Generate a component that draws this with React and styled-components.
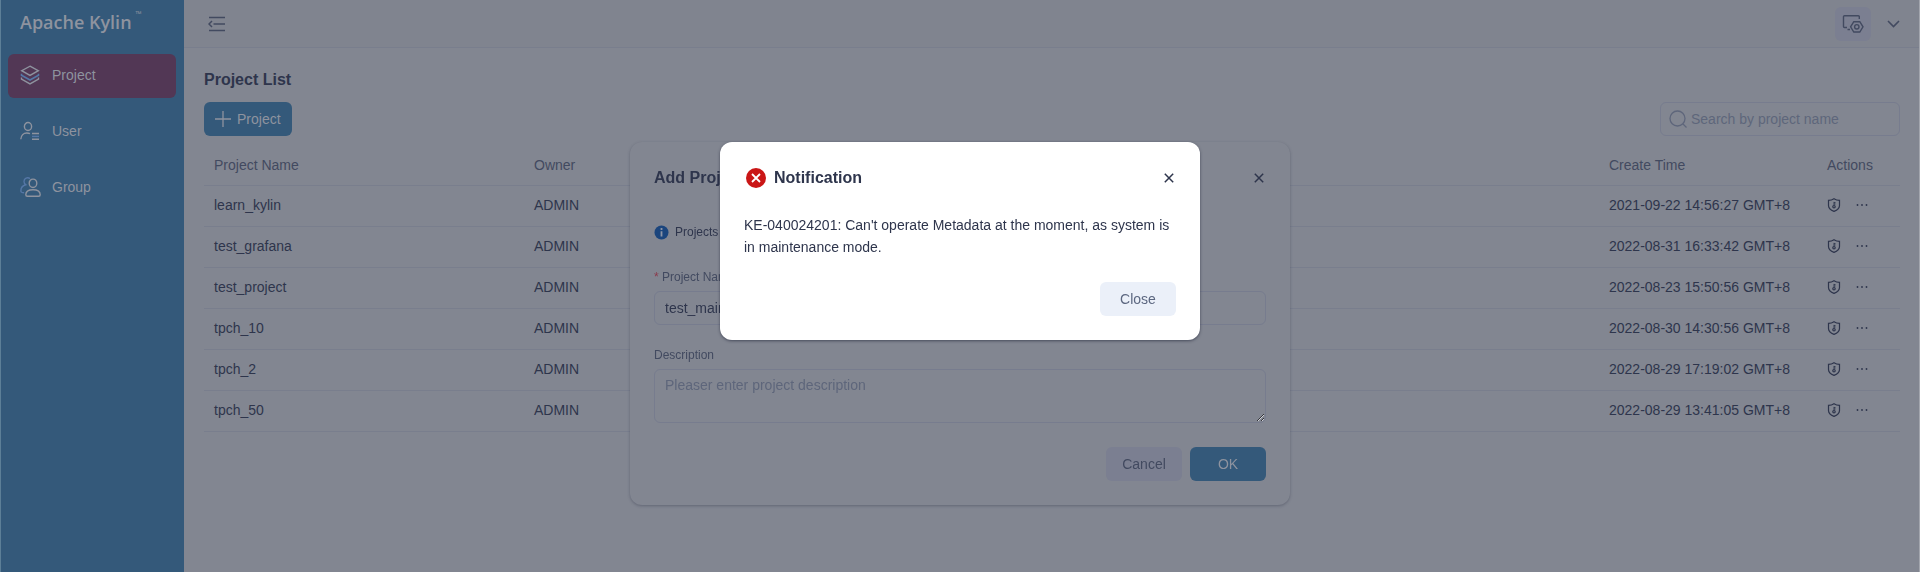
import React from "react";
import styled, { createGlobalStyle } from "styled-components";

const c = {
  page: "#828691",
  bar: "#80848f",
  line: "#797e8d",
  field: "#777c8e",
  blue: "#34597a",
  active: "#523755",
  onBlue: "#8e939f",
  text: "#2e354c",
  muted: "#424a60",
  hint: "#5e667b",
  soft: "#7b7f91",
  accent: "#5577a6",
};

const GlobalStyle = createGlobalStyle`
  * { box-sizing: border-box; }
  body { margin: 0; background: ${c.page}; }
  body, button, input, textarea {
    font-family: "Liberation Sans", Arial, sans-serif;
    font-size: 14px;
  }
  svg { display: block; flex: none; }
`;

const Page = styled.div`
  display: flex;
  min-height: 100vh;
  border-left: 1px solid #5d7f97;
  border-right: 1px solid #a3a6ae;
  color: ${c.text};
`;

const Sidebar = styled.aside`
  width: 183px;
  flex: none;
  background: ${c.blue};
  color: ${c.onBlue};
`;

const Logo = styled.div`
  display: flex;
  align-items: flex-start;
  gap: 4px;
  height: 54px;
  padding: 9px 0 0 19px;
  font: 600 18px/27px "Open Sans", sans-serif;
  sup { font-size: 8px; line-height: 10px; font-weight: 400; }
`;

const Menu = styled.nav`
  display: flex;
  flex-direction: column;
  gap: 12px;
  padding: 0 8px 0 7px;
`;

const MenuItem = styled.a`
  display: flex;
  align-items: center;
  gap: 12px;
  height: 44px;
  padding: 0 12px 2px;
  border-radius: 6px;
  background: ${(p) => (p.$active ? c.active : "transparent")};
  color: inherit;
  text-decoration: none;
`;

const Main = styled.main`
  flex: 1;
  min-width: 0;
`;

const TopBar = styled.header`
  display: flex;
  align-items: center;
  height: 48px;
  padding: 0 19px 0 24px;
  background: ${c.bar};
  border-bottom: 1px solid ${c.line};
`;

const IconButton = styled.button`
  display: flex;
  align-items: center;
  justify-content: center;
  padding: 0;
  border: 0;
  background: none;
  color: ${(p) => (p.$dim ? c.muted : "inherit")};
`;

const AdminButton = styled(IconButton)`
  width: 36px;
  height: 34px;
  margin: 0 16px 0 auto;
  border-radius: 6px;
  background: ${c.soft};
`;

const Content = styled.section`
  padding: 20px 19px 24px 20px;
`;

const Title = styled.h1`
  margin: 0 0 10px;
  font-size: 16px;
  line-height: 24px;
`;

const Tools = styled.div`
  display: flex;
  justify-content: space-between;
  margin-bottom: 8px;
`;

const Button = styled.button`
  display: flex;
  align-items: center;
  justify-content: center;
  gap: 6px;
  height: 34px;
  min-width: 76px;
  padding: 0 11px;
  border: 0;
  border-radius: 6px;
  background: ${(p) => (p.$kind === "primary" ? c.blue : p.$kind === "light" ? "#ebf0f9" : c.soft)};
  color: ${(p) => (p.$kind === "primary" ? c.onBlue : p.$kind === "light" ? "#5c6780" : c.muted)};
`;

const Search = styled.label`
  display: flex;
  align-items: center;
  gap: 4px;
  width: 240px;
  height: 34px;
  padding: 0 8px;
  border: 1px solid ${c.field};
  border-radius: 6px;
  color: ${c.hint};
  input {
    flex: 1;
    min-width: 0;
    padding: 0;
    border: 0;
    outline: 0;
    background: none;
  }
  input::placeholder { color: ${c.hint}; }
`;

const Table = styled.table`
  width: 100%;
  table-layout: fixed;
  border-collapse: separate;
  border-spacing: 0;
  th, td {
    height: 41px;
    padding: 0 10px 2px;
    border-bottom: 1px solid ${c.line};
    text-align: left;
    white-space: nowrap;
  }
  th { height: 42px; padding-bottom: 0; font-weight: 400; color: ${c.muted}; }
`;

const Col = styled.col`
  width: ${(p) => (p.$w ? p.$w + "px" : "auto")};
`;

const RowActions = styled.div`
  display: flex;
  align-items: center;
  gap: 15px;
`;

const Overlay = styled.div`
  position: fixed;
  inset: 0;
  display: flex;
  justify-content: center;
  align-items: flex-start;
  padding-top: 142px;
`;

const Dialog = styled.section`
  width: ${(p) => p.$width}px;
  padding: 24px;
  border-radius: 12px;
  background: ${(p) => (p.$light ? "#fff" : c.page)};
  color: ${c.text};
  box-shadow: 0 1px 3px ${(p) => (p.$light ? "rgba(30, 35, 55, 0.6)" : "rgba(50, 56, 76, 0.4)")};
`;

const DialogHead = styled.header`
  display: flex;
  align-items: center;
  gap: 8px;
  height: 24px;
  margin-bottom: 24px;
  padding-left: ${(p) => (p.$icon ? "2px" : "0")};
  h2 { flex: 1; margin: 0; font-size: 16px; line-height: 24px; }
  button { width: 14px; height: 24px; }
`;

const Message = styled.p`
  margin: 0 0 24px;
  line-height: 22px;
`;

const Info = styled.p`
  display: flex;
  align-items: center;
  gap: 6px;
  height: 36px;
  margin: 0 0 17px;
  font-size: 12px;
`;

const Label = styled.label`
  display: block;
  margin-bottom: 4px;
  font-size: 12px;
  line-height: 20px;
  color: ${c.muted};
  span { color: #8b3a4c; }
`;

const Input = styled.input`
  display: block;
  width: 100%;
  height: 34px;
  margin-bottom: 20px;
  padding: 0 10px;
  border: 1px solid ${c.field};
  border-radius: 6px;
  background: none;
  color: ${c.text};
`;

const TextArea = styled.textarea`
  display: block;
  width: 100%;
  height: 54px;
  margin-bottom: 24px;
  padding: 5px 10px;
  border: 1px solid ${c.field};
  border-radius: 6px;
  background: none;
  line-height: 20px;
  resize: vertical;
  &::placeholder { color: ${c.hint}; }
`;

const Footer = styled.footer`
  display: flex;
  justify-content: flex-end;
  gap: 8px;
`;

const Svg = ({ w, h = w, sw = 1, children }) => (
  <svg width={w} height={h} viewBox={`0 0 ${w} ${h}`} fill="none" stroke="currentColor" strokeWidth={sw} aria-hidden="true">
    {children}
  </svg>
);

const ProjectIcon = () => (
  <Svg w={20} sw={1.4}>
    <path d="M10 1.2 18.300 5.700 10 10.400 1.700 5.700Z" />
    <path d="M1.500 8.700v1.500L10 15l8.500-4.800V8.700" stroke={c.accent} strokeWidth="1.600" />
    <path d="M1.500 12.500v1.600L10 18.900l8.500-4.800v-1.600" />
  </Svg>
);
const UserIcon = () => (
  <Svg w={20} sw={1.4}>
    <ellipse cx="8" cy="5.5" rx="3.6" ry="4" />
    <path d="M.8 18.3c.2-3.8 2.7-6.3 6-6.3 1.3 0 2.2.2 3.2.7" />
    <path d="M12 12.5h7M12 18.3h7" />
    <path d="M12 15.4h7" stroke={c.accent} />
  </Svg>
);
const GroupIcon = () => (
  <Svg w={22} h={20} sw={1.4}>
    <path d="M10 1.6C7.500-.3 4 1.200 4 4.500c0 1.500.8 2.600 1.800 3.300C2.500 8.700.7 11.200.9 14.200c.1 1 1.600 1.500 3.200 1.500" stroke={c.accent} />
    <ellipse cx="13" cy="6.300" rx="3.800" ry="4.200" />
    <path d="M5.800 17.700c0-3 2.800-5 7.200-5s7.200 2 7.200 5c0 1-.6 1.500-1.500 1.500H7.300c-.9 0-1.500-.5-1.500-1.500Z" />
  </Svg>
);
const GroupSlot = styled.span`
  width: 20px;
`;
const FoldIcon = () => (
  <Svg w={18} h={16} sw={1.5}>
    <path d="M1 1.5h16M5.500 8H17M1 14.500h16M4 5 1 8l3 3" />
  </Svg>
);
const AdminIcon = () => (
  <Svg w={22} h={20} sw={1.4}>
    <path d="M17.300 5V2.700a1 1 0 0 0-1-1H2.500a1 1 0 0 0-1 1V12.500a1 1 0 0 0 1 1H5M5.500 15.500H8" />
    <path d="M11.800 7.700h6l3.200 5.100-3.200 5.200h-6l-3.200-5.200Z" />
    <circle cx="14.800" cy="12.800" r="2.200" />
  </Svg>
);
const ChevronIcon = () => (
  <Svg w={13} h={8} sw={1.6}><path d="m1 1 5.500 5.500L12 1" /></Svg>
);
const PlusIcon = () => (
  <Svg w={16} sw={1.3}><path d="M8 0v16M0 8h16" /></Svg>
);
const SearchIcon = () => (
  <Svg w={18} sw={1.3}><circle cx="8.5" cy="8.5" r="7.5" /><path d="m14 14 3.5 3.500" /></Svg>
);
const ShieldIcon = () => (
  <Svg w={14} sw={1.2}>
    <path d="M7 .7Q9.500 2.300 12.500 2.300V7.500c0 2.800-2.300 4.700-5.500 5.900C3.800 12.200 1.500 10.300 1.500 7.500V2.300Q4.500 2.300 7 .7Z" />
    <circle cx="7" cy="8.700" r="1.200" />
    <path d="M7 7.500V3.900M7 4.600h1.500M7 6h1.500" strokeWidth=".9" />
  </Svg>
);
const MoreIcon = () => (
  <Svg w={12} h={4} sw={0}>
    <g fill="currentColor"><circle cx="1.5" cy="2" r=".9" /><circle cx="6" cy="2" r=".9" /><circle cx="10.5" cy="2" r=".9" /></g>
  </Svg>
);
const CloseIcon = () => (
  <Svg w={10} sw={1.5}><path d="m.8.8 8.400 8.400M9.200.8.8 9.200" /></Svg>
);
const ErrorIcon = () => (
  <svg width="20" height="20" viewBox="0 0 20 20" aria-hidden="true">
    <circle cx="10" cy="10" r="10" fill="#ca1616" />
    <path d="m6 6 8 8m0-8-8 8" stroke="#fff" strokeWidth="1.800" />
  </svg>
);
const InfoIcon = () => (
  <svg width="15" height="15" viewBox="0 0 15 15" aria-hidden="true">
    <circle cx="7.5" cy="7.5" r="7" fill="#1b457d" />
    <path d="M7.500 3v2M7.500 6.200v5.300" stroke="#8c94a5" strokeWidth="1.800" />
  </svg>
);

const menu = [
  ["Project", ProjectIcon],
  ["User", UserIcon],
  ["Group", GroupIcon],
];

const projects = [
  ["learn_kylin", "2021-09-22 14:56:27 GMT+8"],
  ["test_grafana", "2022-08-31 16:33:42 GMT+8"],
  ["test_project", "2022-08-23 15:50:56 GMT+8"],
  ["tpch_10", "2022-08-30 14:30:56 GMT+8"],
  ["tpch_2", "2022-08-29 17:19:02 GMT+8"],
  ["tpch_50", "2022-08-29 13:41:05 GMT+8"],
];

export default function App() {
  return (
    <>
      <GlobalStyle />
      <Page>
        <Sidebar>
          <Logo>Apache Kylin<sup>™</sup></Logo>
          <Menu>
            {menu.map(([name, Icon], i) => (
              <MenuItem key={name} href="#" $active={i === 0}>
                <GroupSlot><Icon /></GroupSlot>{name}
              </MenuItem>
            ))}
          </Menu>
        </Sidebar>
        <Main>
          <TopBar>
            <IconButton $dim aria-label="Collapse menu"><FoldIcon /></IconButton>
            <AdminButton $dim aria-label="Admin settings"><AdminIcon /></AdminButton>
            <IconButton $dim aria-label="More"><ChevronIcon /></IconButton>
          </TopBar>
          <Content>
            <Title>Project List</Title>
            <Tools>
              <Button $kind="primary"><PlusIcon />Project</Button>
              <Search>
                <SearchIcon />
                <input type="text" aria-label="Search" placeholder="Search by project name" />
              </Search>
            </Tools>
            <Table>
              <colgroup><Col $w={320} /><Col $w={320} /><Col /><Col $w={218} /><Col $w={83} /></colgroup>
              <thead>
                <tr><th>Project Name</th><th>Owner</th><th /><th>Create Time</th><th>Actions</th></tr>
              </thead>
              <tbody>
                {projects.map(([name, time]) => (
                  <tr key={name}>
                    <td>{name}</td>
                    <td>ADMIN</td>
                    <td />
                    <td>{time}</td>
                    <td>
                      <RowActions>
                        <IconButton aria-label="Authorization"><ShieldIcon /></IconButton>
                        <IconButton aria-label="More actions"><MoreIcon /></IconButton>
                      </RowActions>
                    </td>
                  </tr>
                ))}
              </tbody>
            </Table>
          </Content>
        </Main>
      </Page>

      <Overlay>
        <Dialog $width={660} role="dialog" aria-labelledby="add-title">
          <DialogHead>
            <h2 id="add-title">Add Project</h2>
            <IconButton aria-label="Close dialog"><CloseIcon /></IconButton>
          </DialogHead>
          <Info><InfoIcon />Projects</Info>
          <Label htmlFor="name"><span>*</span> Project Name</Label>
          <Input id="name" type="text" defaultValue="test_maintenance" />
          <Label htmlFor="description">Description</Label>
          <TextArea id="description" placeholder="Pleaser enter project description" />
          <Footer>
            <Button>Cancel</Button>
            <Button $kind="primary">OK</Button>
          </Footer>
        </Dialog>
      </Overlay>

      <Overlay>
        <Dialog $width={480} $light role="alertdialog" aria-labelledby="note-title">
          <DialogHead $icon>
            <ErrorIcon />
            <h2 id="note-title">Notification</h2>
            <IconButton aria-label="Close notification"><CloseIcon /></IconButton>
          </DialogHead>
          <Message>
            KE-040024201: Can't operate Metadata at the moment, as system is in maintenance mode.
          </Message>
          <Footer><Button $kind="light">Close</Button></Footer>
        </Dialog>
      </Overlay>
    </>
  );
}
